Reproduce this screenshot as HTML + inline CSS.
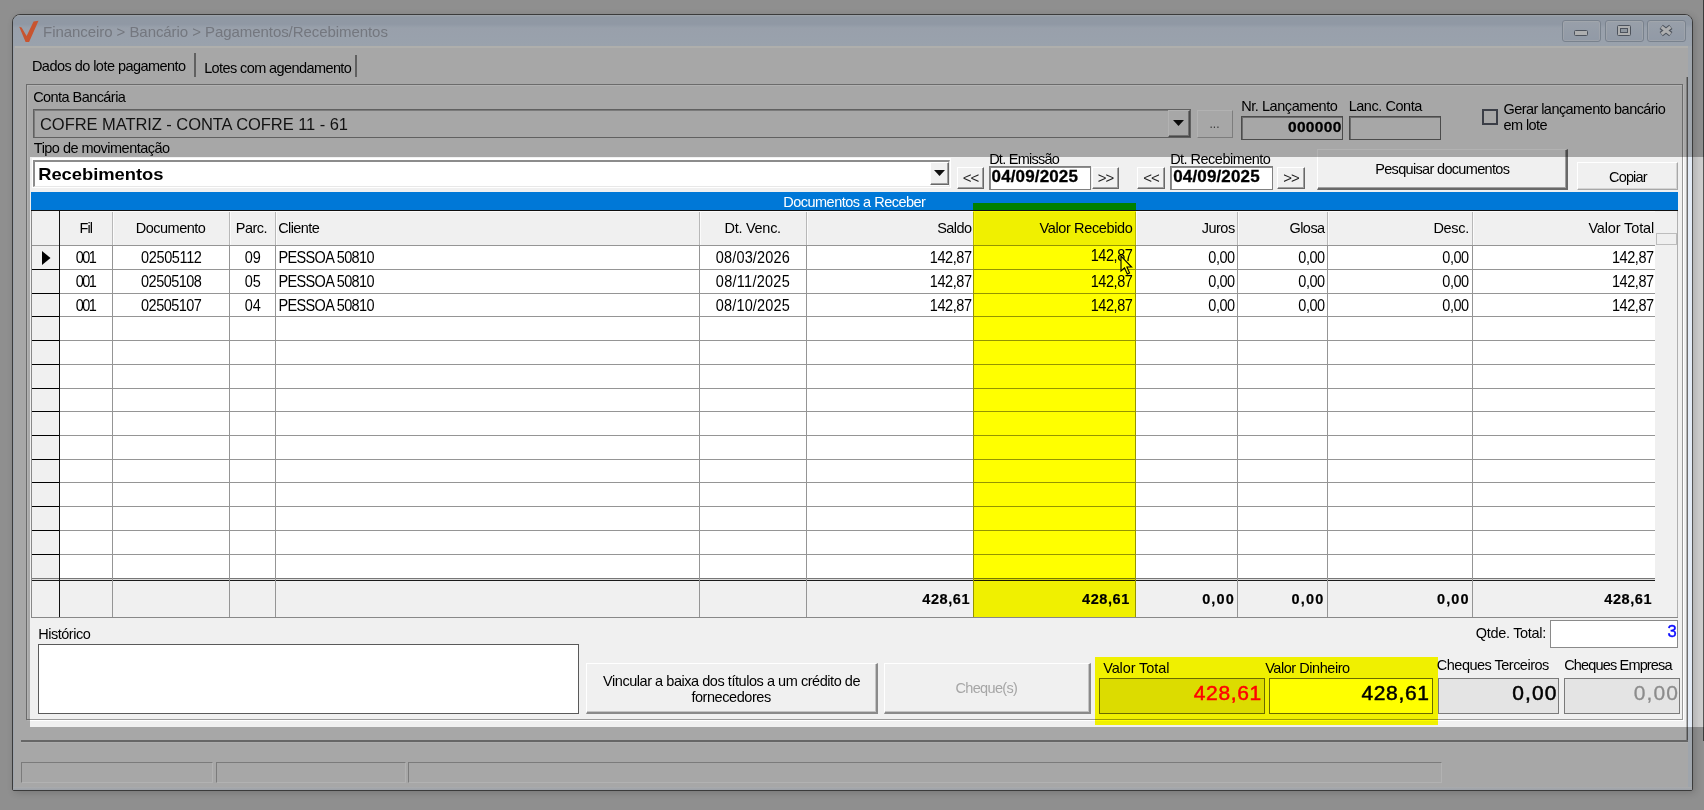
<!DOCTYPE html>
<html><head><meta charset="utf-8"><title>Pagamentos/Recebimentos</title>
<style>
html,body{margin:0;padding:0;}
body{width:1704px;height:810px;overflow:hidden;position:relative;background:#cdcdcd;font-family:"Liberation Sans", sans-serif;}
div{position:absolute;box-sizing:border-box;}
svg{position:absolute;overflow:visible;}
.t{font-family:"Liberation Sans", sans-serif;}
</style></head>
<body>
<div style="left:12px;top:14px;width:1681px;height:777px;background:#f0f0f0;border:1px solid #555;border-radius:8px 8px 2px 2px;box-shadow:2px 2px 7px rgba(0,0,0,.16);"></div>
<div style="left:13px;top:15px;width:1679px;height:31px;background:linear-gradient(#e4ecf6 0,#cfdbeb 2px,#cedaeb 9px,#dbe6f5 13px,#dde8f7 100%);border-radius:7px 7px 0 0;"></div>
<div style="left:15px;top:46px;width:1673px;height:740px;background:#f0f0f0;"></div>
<div style="left:15px;top:46px;width:1673px;height:2px;background:#fbfbf6;"></div>
<div style="left:13px;top:46px;width:1px;height:744px;background:#e3ebf6;"></div>
<div style="left:1688px;top:46px;width:4px;height:744px;background:#e4ecf7;"></div>
<div style="left:13px;top:787px;width:1679px;height:3px;background:linear-gradient(#f4f6f9,#dfe6f0);"></div>
<div style="left:1686px;top:77px;width:1px;height:665px;background:#b5b5b5;"></div>
<div style="left:1687px;top:77px;width:1px;height:665px;background:#6f6f6f;"></div>
<div style="left:21px;top:740px;width:1667px;height:2px;background:#929292;"></div>
<div style="left:21px;top:742px;width:1667px;height:1px;background:#f8f8f8;"></div>
<div class="t" id="t11" style="top:16.5px;font-size:15px;line-height:30px;height:30px;font-weight:normal;color:#a6abb6;white-space:nowrap;letter-spacing:-0.063px;left:43.10px;"><span>Financeiro &gt; Bancário &gt; Pagamentos/Recebimentos</span></div>
<div style="left:1562px;top:20px;width:39px;height:22px;background:linear-gradient(#dbe5f3,#d0dcee);border:1px solid #aebacb;border-radius:3px;box-shadow:inset 0 0 0 1px rgba(255,255,255,.35);"></div>
<div style="left:1605px;top:20px;width:39px;height:22px;background:linear-gradient(#dbe5f3,#d0dcee);border:1px solid #aebacb;border-radius:3px;box-shadow:inset 0 0 0 1px rgba(255,255,255,.35);"></div>
<div style="left:1647px;top:20px;width:39px;height:22px;background:linear-gradient(#dbe5f3,#d0dcee);border:1px solid #aebacb;border-radius:3px;box-shadow:inset 0 0 0 1px rgba(255,255,255,.35);"></div>
<div style="left:1574px;top:30px;width:14px;height:6px;background:#fafbfc;border:1px solid #6f7886;border-radius:1.5px;"></div>
<div style="left:1617px;top:25px;width:14px;height:11px;background:#fafbfc;border:1px solid #6f7886;border-radius:1.5px;"></div>
<div style="left:1620px;top:28px;width:8px;height:5px;background:#cdd8e6;border:1px solid #6f7886;"></div>
<svg style="left:1658px;top:24px" width="16" height="13" viewBox="0 0 16 13"><path d="M3.2 2.8 L12.8 10.2 M12.8 2.8 L3.2 10.2" stroke="#6f7886" stroke-width="5.4" stroke-linecap="butt"/><path d="M3.6 3.1 L12.4 9.9 M12.4 3.1 L3.6 9.9" stroke="#fafbfc" stroke-width="3.2" stroke-linecap="butt"/></svg>
<div class="t" id="t19" style="top:51px;font-size:14.5px;line-height:30px;height:30px;font-weight:normal;color:#000;white-space:nowrap;letter-spacing:-0.538px;left:31.93px;"><span>Dados do lote pagamento</span></div>
<div style="left:194px;top:53px;width:2px;height:24px;background:#8a8a8a;"></div>
<div class="t" id="t21" style="top:53px;font-size:14.5px;line-height:30px;height:30px;font-weight:normal;color:#000;white-space:nowrap;letter-spacing:-0.593px;left:204.13px;"><span>Lotes com agendamento</span></div>
<div style="left:355px;top:55px;width:2px;height:22px;background:#8a8a8a;"></div>
<div style="left:26px;top:84px;width:1657px;height:636px;background:#f0f0f0;border:1px solid #9a9a9a;box-shadow:inset 1px 1px 0 #fff, 1px 1px 0 #fff;"></div>
<div class="t" id="t24" style="top:82px;font-size:14.5px;line-height:30px;height:30px;font-weight:normal;color:#000;white-space:nowrap;letter-spacing:-0.555px;left:33.13px;"><span>Conta Bancária</span></div>
<div style="left:33px;top:109px;width:1158px;height:29px;background:#f0f0f0;border:1px solid #8a8a8a;box-shadow:inset 1px 1px 0 #b0b0b0;"></div>
<div class="t" id="t26" style="top:109px;font-size:16.5px;line-height:30px;height:30px;font-weight:normal;color:#1a1a1a;white-space:nowrap;letter-spacing:-0.057px;left:40.01px;"><span>COFRE MATRIZ - CONTA COFRE 11 - 61</span></div>
<div style="left:1168px;top:110px;width:22px;height:27px;background:#f0f0f0;border-top:1px solid #ffffff;border-left:1px solid #ffffff;border-right:1px solid #696969;border-bottom:1px solid #696969;box-shadow:inset -1px -1px 0 #a0a0a0;"></div>
<svg style="left:1173px;top:120px" width="11" height="6"><path d="M0 0 H11 L5.5 6 Z" fill="#111"/></svg>
<div style="left:1197px;top:110px;width:36px;height:28px;background:#f0f0f0;border-top:1px solid #fff;border-left:1px solid #fff;border-right:1px solid #b4b4b4;border-bottom:1px solid #b4b4b4;"></div>
<div class="t" id="t30" style="top:109px;font-size:12px;line-height:30px;height:30px;font-weight:normal;color:#555;white-space:nowrap;left:714.50px;width:1000px;text-align:center;"><span>...</span></div>
<div class="t" id="t31" style="top:91px;font-size:14.5px;line-height:30px;height:30px;font-weight:normal;color:#000;white-space:nowrap;letter-spacing:-0.433px;left:1241.13px;"><span>Nr. Lançamento</span></div>
<div style="left:1241px;top:116px;width:102px;height:24px;background:#f0f0f0;border:1px solid #6c6c6c;box-shadow:inset 1px 1px 0 #9c9c9c;"></div>
<div class="t" id="t33" style="top:111.5px;font-size:15.5px;line-height:30px;height:30px;font-weight:bold;color:#000;white-space:nowrap;letter-spacing:0.365px;right:362.20px;-webkit-text-stroke:0.3px #000;"><span>000000</span></div>
<div class="t" id="t34" style="top:91px;font-size:14.5px;line-height:30px;height:30px;font-weight:normal;color:#000;white-space:nowrap;letter-spacing:-0.446px;left:1348.63px;"><span>Lanc. Conta</span></div>
<div style="left:1349px;top:116px;width:92px;height:24px;background:#f0f0f0;border:1px solid #6c6c6c;box-shadow:inset 1px 1px 0 #9c9c9c;"></div>
<div style="left:1482px;top:109px;width:16px;height:16px;background:#f0f0f0;border:2px solid #555a66;"></div>
<div class="t" id="t37" style="top:94px;font-size:14.5px;line-height:30px;height:30px;font-weight:normal;color:#000;white-space:nowrap;letter-spacing:-0.553px;left:1503.43px;"><span>Gerar lançamento bancário</span></div>
<div class="t" id="t38" style="top:110px;font-size:14.5px;line-height:30px;height:30px;font-weight:normal;color:#000;white-space:nowrap;letter-spacing:-0.570px;left:1503.43px;"><span>em lote</span></div>
<div class="t" id="t39" style="top:133px;font-size:14.5px;line-height:30px;height:30px;font-weight:normal;color:#000;white-space:nowrap;letter-spacing:-0.522px;left:33.83px;"><span>Tipo de movimentação</span></div>
<div style="left:32px;top:158px;width:919px;height:30px;background:#fff;border:1px solid #fff;"></div>
<div style="left:33px;top:160px;width:917px;height:27px;background:#fff;border-top:2px solid #8c8c8c;border-left:2px solid #8c8c8c;border-right:1px solid #e8e8e8;border-bottom:1px solid #e8e8e8;"></div>
<div class="t" id="t42" style="top:158.5px;font-size:18.4px;line-height:30px;height:30px;font-weight:bold;color:#000;white-space:nowrap;letter-spacing:-0.046px;left:38.20px;transform:scaleY(0.93);transform-origin:0 21.5px;"><span>Recebimentos</span></div>
<div style="left:930px;top:162px;width:19px;height:23px;background:#f0f0f0;border-top:1px solid #ffffff;border-left:1px solid #ffffff;border-right:1px solid #696969;border-bottom:1px solid #696969;box-shadow:inset -1px -1px 0 #a0a0a0;"></div>
<svg style="left:934px;top:170px" width="11" height="6"><path d="M0 0 H11 L5.5 6 Z" fill="#111"/></svg>
<div style="left:957px;top:167px;width:27px;height:22px;background:#f0f0f0;border-top:1px solid #ffffff;border-left:1px solid #ffffff;border-right:1px solid #696969;border-bottom:1px solid #696969;box-shadow:inset -1px -1px 0 #a0a0a0;"></div>
<div class="t" id="t46" style="top:162.5px;font-size:15px;line-height:30px;height:30px;font-weight:normal;color:#222;white-space:nowrap;left:470.50px;width:1000px;text-align:center;letter-spacing:-1px;"><span>&lt;&lt;</span></div>
<div class="t" id="t47" style="top:144px;font-size:14.5px;line-height:30px;height:30px;font-weight:normal;color:#000;white-space:nowrap;letter-spacing:-0.743px;left:989.13px;"><span>Dt. Emissão</span></div>
<div style="left:989px;top:166px;width:102px;height:24px;background:#fff;border:1px solid #808080;box-shadow:inset 1px 1px 0 #8e8e8e;"></div>
<div class="t" id="t49" style="top:161.5px;font-size:17px;line-height:30px;height:30px;font-weight:bold;color:#000;white-space:nowrap;letter-spacing:0.138px;left:991.58px;transform:scaleY(0.96);transform-origin:0 20.5px;-webkit-text-stroke:0.3px #000;"><span>04/09/2025</span></div>
<div style="left:1092px;top:167px;width:27px;height:22px;background:#f0f0f0;border-top:1px solid #ffffff;border-left:1px solid #ffffff;border-right:1px solid #696969;border-bottom:1px solid #696969;box-shadow:inset -1px -1px 0 #a0a0a0;"></div>
<div class="t" id="t51" style="top:162.5px;font-size:15px;line-height:30px;height:30px;font-weight:normal;color:#222;white-space:nowrap;left:605.50px;width:1000px;text-align:center;letter-spacing:-1px;"><span>&gt;&gt;</span></div>
<div style="left:1137px;top:167px;width:28px;height:22px;background:#f0f0f0;border-top:1px solid #ffffff;border-left:1px solid #ffffff;border-right:1px solid #696969;border-bottom:1px solid #696969;box-shadow:inset -1px -1px 0 #a0a0a0;"></div>
<div class="t" id="t53" style="top:162.5px;font-size:15px;line-height:30px;height:30px;font-weight:normal;color:#222;white-space:nowrap;left:651.00px;width:1000px;text-align:center;letter-spacing:-1px;"><span>&lt;&lt;</span></div>
<div class="t" id="t54" style="top:144px;font-size:14.5px;line-height:30px;height:30px;font-weight:normal;color:#000;white-space:nowrap;letter-spacing:-0.519px;left:1170.13px;"><span>Dt. Recebimento</span></div>
<div style="left:1170px;top:166px;width:103px;height:24px;background:#fff;border:1px solid #808080;box-shadow:inset 1px 1px 0 #8e8e8e;"></div>
<div class="t" id="t56" style="top:161.5px;font-size:17px;line-height:30px;height:30px;font-weight:bold;color:#000;white-space:nowrap;letter-spacing:0.138px;left:1173.28px;transform:scaleY(0.96);transform-origin:0 20.5px;-webkit-text-stroke:0.3px #000;"><span>04/09/2025</span></div>
<div style="left:1277px;top:167px;width:28px;height:22px;background:#f0f0f0;border-top:1px solid #ffffff;border-left:1px solid #ffffff;border-right:1px solid #696969;border-bottom:1px solid #696969;box-shadow:inset -1px -1px 0 #a0a0a0;"></div>
<div class="t" id="t58" style="top:162.5px;font-size:15px;line-height:30px;height:30px;font-weight:normal;color:#222;white-space:nowrap;left:791.00px;width:1000px;text-align:center;letter-spacing:-1px;"><span>&gt;&gt;</span></div>
<div style="left:1317px;top:149px;width:251px;height:41px;background:#f0f0f0;border-top:1px solid #ffffff;border-left:1px solid #ffffff;border-right:1px solid #696969;border-bottom:1px solid #696969;box-shadow:inset -1px -1px 0 #a0a0a0;border-right-width:2px;border-bottom-width:2px;"></div>
<div class="t" id="t60" style="top:154px;font-size:14.5px;line-height:30px;height:30px;font-weight:normal;color:#000;white-space:nowrap;letter-spacing:-0.672px;left:942.26px;width:1000px;text-align:center;"><span>Pesquisar documentos</span></div>
<div style="left:1577px;top:162px;width:101px;height:28px;background:#f0f0f0;border-top:1px solid #fff;border-left:1px solid #fff;border-right:1px solid #a8a8a8;border-bottom:1px solid #a8a8a8;box-shadow:inset -1px -1px 0 #d4d4d4;"></div>
<div class="t" id="t62" style="top:162px;font-size:14.5px;line-height:30px;height:30px;font-weight:normal;color:#000;white-space:nowrap;letter-spacing:-0.856px;left:1127.87px;width:1000px;text-align:center;"><span>Copiar</span></div>
<div style="left:31px;top:192px;width:1647px;height:19px;background:#0078d7;border-bottom:1px solid #101010;"></div>
<div class="t" id="t64" style="top:187px;font-size:14.5px;line-height:30px;height:30px;font-weight:normal;color:#fff;white-space:nowrap;letter-spacing:-0.505px;left:354.35px;width:1000px;text-align:center;"><span>Documentos a Receber</span></div>
<div style="left:31px;top:211px;width:1647px;height:407px;background:#f0f0f0;"></div>
<div style="left:31px;top:246px;width:1624px;height:332px;background:#fff;"></div>
<div style="left:31px;top:211px;width:1624px;height:35px;background:#f0f0f0;"></div>
<div style="left:31px;top:211px;width:28px;height:406px;background:#f0f0f0;"></div>
<div style="left:31px;top:245px;width:1624px;height:1px;background:#959595;"></div>
<div style="left:31px;top:269px;width:1624px;height:1px;background:#959595;"></div>
<div style="left:31px;top:293px;width:1624px;height:1px;background:#959595;"></div>
<div style="left:31px;top:316px;width:1624px;height:1px;background:#959595;"></div>
<div style="left:31px;top:340px;width:1624px;height:1px;background:#959595;"></div>
<div style="left:31px;top:364px;width:1624px;height:1px;background:#959595;"></div>
<div style="left:31px;top:388px;width:1624px;height:1px;background:#959595;"></div>
<div style="left:31px;top:411px;width:1624px;height:1px;background:#959595;"></div>
<div style="left:31px;top:435px;width:1624px;height:1px;background:#959595;"></div>
<div style="left:31px;top:459px;width:1624px;height:1px;background:#959595;"></div>
<div style="left:31px;top:482px;width:1624px;height:1px;background:#959595;"></div>
<div style="left:31px;top:506px;width:1624px;height:1px;background:#959595;"></div>
<div style="left:31px;top:530px;width:1624px;height:1px;background:#959595;"></div>
<div style="left:31px;top:554px;width:1624px;height:1px;background:#959595;"></div>
<div style="left:31px;top:269px;width:28px;height:1px;background:#000;"></div>
<div style="left:31px;top:293px;width:28px;height:1px;background:#000;"></div>
<div style="left:31px;top:316px;width:28px;height:1px;background:#000;"></div>
<div style="left:31px;top:340px;width:28px;height:1px;background:#000;"></div>
<div style="left:31px;top:364px;width:28px;height:1px;background:#000;"></div>
<div style="left:31px;top:388px;width:28px;height:1px;background:#000;"></div>
<div style="left:31px;top:411px;width:28px;height:1px;background:#000;"></div>
<div style="left:31px;top:435px;width:28px;height:1px;background:#000;"></div>
<div style="left:31px;top:459px;width:28px;height:1px;background:#000;"></div>
<div style="left:31px;top:482px;width:28px;height:1px;background:#000;"></div>
<div style="left:31px;top:506px;width:28px;height:1px;background:#000;"></div>
<div style="left:31px;top:530px;width:28px;height:1px;background:#000;"></div>
<div style="left:31px;top:554px;width:28px;height:1px;background:#000;"></div>
<div style="left:31px;top:578px;width:1624px;height:1px;background:#777;"></div>
<div style="left:31px;top:580px;width:1624px;height:1px;background:#1a1a1a;"></div>
<div style="left:31px;top:579px;width:1624px;height:1px;background:#ddd;"></div>
<div style="left:112px;top:211px;width:1px;height:406px;background:#959595;"></div>
<div style="left:112px;top:211px;width:1px;height:34px;background:#b8b8b8;"></div>
<div style="left:113px;top:211px;width:1px;height:34px;background:#fbfbfb;"></div>
<div style="left:229px;top:211px;width:1px;height:406px;background:#959595;"></div>
<div style="left:229px;top:211px;width:1px;height:34px;background:#b8b8b8;"></div>
<div style="left:230px;top:211px;width:1px;height:34px;background:#fbfbfb;"></div>
<div style="left:275px;top:211px;width:1px;height:406px;background:#959595;"></div>
<div style="left:275px;top:211px;width:1px;height:34px;background:#b8b8b8;"></div>
<div style="left:276px;top:211px;width:1px;height:34px;background:#fbfbfb;"></div>
<div style="left:699px;top:211px;width:1px;height:406px;background:#959595;"></div>
<div style="left:699px;top:211px;width:1px;height:34px;background:#b8b8b8;"></div>
<div style="left:700px;top:211px;width:1px;height:34px;background:#fbfbfb;"></div>
<div style="left:806px;top:211px;width:1px;height:406px;background:#959595;"></div>
<div style="left:806px;top:211px;width:1px;height:34px;background:#b8b8b8;"></div>
<div style="left:807px;top:211px;width:1px;height:34px;background:#fbfbfb;"></div>
<div style="left:973px;top:211px;width:1px;height:406px;background:#959595;"></div>
<div style="left:973px;top:211px;width:1px;height:34px;background:#b8b8b8;"></div>
<div style="left:974px;top:211px;width:1px;height:34px;background:#fbfbfb;"></div>
<div style="left:1135px;top:211px;width:1px;height:406px;background:#959595;"></div>
<div style="left:1135px;top:211px;width:1px;height:34px;background:#b8b8b8;"></div>
<div style="left:1136px;top:211px;width:1px;height:34px;background:#fbfbfb;"></div>
<div style="left:1237px;top:211px;width:1px;height:406px;background:#959595;"></div>
<div style="left:1237px;top:211px;width:1px;height:34px;background:#b8b8b8;"></div>
<div style="left:1238px;top:211px;width:1px;height:34px;background:#fbfbfb;"></div>
<div style="left:1327px;top:211px;width:1px;height:406px;background:#959595;"></div>
<div style="left:1327px;top:211px;width:1px;height:34px;background:#b8b8b8;"></div>
<div style="left:1328px;top:211px;width:1px;height:34px;background:#fbfbfb;"></div>
<div style="left:1472px;top:211px;width:1px;height:406px;background:#959595;"></div>
<div style="left:1472px;top:211px;width:1px;height:34px;background:#b8b8b8;"></div>
<div style="left:1473px;top:211px;width:1px;height:34px;background:#fbfbfb;"></div>
<div style="left:60px;top:211px;width:1595px;height:1px;background:#fbfbfb;"></div>
<div style="left:59px;top:211px;width:1px;height:406px;background:#111;"></div>
<div style="left:31px;top:211px;width:1px;height:406px;background:#888;"></div>
<div style="left:31px;top:617px;width:1647px;height:1px;background:#888;"></div>
<div style="left:1677px;top:211px;width:1px;height:406px;background:#b0b0b0;"></div>
<div style="left:1656px;top:233px;width:21px;height:12px;background:#efefef;border:1px solid #bdbdbd;"></div>
<div class="t" id="t135" style="top:213px;font-size:14.5px;line-height:30px;height:30px;font-weight:normal;color:#000;white-space:nowrap;letter-spacing:-0.936px;left:-414.17px;width:1000px;text-align:center;transform:scaleY(1.03);transform-origin:0 20px;"><span>Fil</span></div>
<div class="t" id="t136" style="top:213px;font-size:14.5px;line-height:30px;height:30px;font-weight:normal;color:#000;white-space:nowrap;letter-spacing:-0.515px;left:-329.46px;width:1000px;text-align:center;transform:scaleY(1.03);transform-origin:0 20px;"><span>Documento</span></div>
<div class="t" id="t137" style="top:213px;font-size:14.5px;line-height:30px;height:30px;font-weight:normal;color:#000;white-space:nowrap;letter-spacing:-0.526px;left:-248.56px;width:1000px;text-align:center;transform:scaleY(1.03);transform-origin:0 20px;"><span>Parc.</span></div>
<div class="t" id="t138" style="top:213px;font-size:14.5px;line-height:30px;height:30px;font-weight:normal;color:#000;white-space:nowrap;letter-spacing:-0.567px;left:278.13px;transform:scaleY(1.03);transform-origin:0 20px;"><span>Cliente</span></div>
<div class="t" id="t139" style="top:213px;font-size:14.5px;line-height:30px;height:30px;font-weight:normal;color:#000;white-space:nowrap;letter-spacing:-0.263px;left:252.67px;width:1000px;text-align:center;transform:scaleY(1.03);transform-origin:0 20px;"><span>Dt. Venc.</span></div>
<div class="t" id="t140" style="top:213px;font-size:14.5px;line-height:30px;height:30px;font-weight:normal;color:#000;white-space:nowrap;letter-spacing:-0.513px;right:732.34px;transform:scaleY(1.03);transform-origin:0 20px;"><span>Saldo</span></div>
<div class="t" id="t141" style="top:213px;font-size:14.5px;line-height:30px;height:30px;font-weight:normal;color:#000;white-space:nowrap;letter-spacing:-0.357px;right:571.49px;transform:scaleY(1.03);transform-origin:0 20px;"><span>Valor Recebido</span></div>
<div class="t" id="t142" style="top:213px;font-size:14.5px;line-height:30px;height:30px;font-weight:normal;color:#000;white-space:nowrap;letter-spacing:-0.532px;right:469.36px;transform:scaleY(1.03);transform-origin:0 20px;"><span>Juros</span></div>
<div class="t" id="t143" style="top:213px;font-size:14.5px;line-height:30px;height:30px;font-weight:normal;color:#000;white-space:nowrap;letter-spacing:-0.538px;right:379.37px;transform:scaleY(1.03);transform-origin:0 20px;"><span>Glosa</span></div>
<div class="t" id="t144" style="top:213px;font-size:14.5px;line-height:30px;height:30px;font-weight:normal;color:#000;white-space:nowrap;letter-spacing:-0.335px;right:235.16px;transform:scaleY(1.03);transform-origin:0 20px;"><span>Desc.</span></div>
<div class="t" id="t145" style="top:213px;font-size:14.5px;line-height:30px;height:30px;font-weight:normal;color:#000;white-space:nowrap;letter-spacing:-0.143px;right:49.97px;transform:scaleY(1.03);transform-origin:0 20px;"><span>Valor Total</span></div>
<div class="t" id="t146" style="top:243px;font-size:14.5px;line-height:30px;height:30px;font-weight:normal;color:#000;white-space:nowrap;letter-spacing:-1.532px;left:-414.57px;width:1000px;text-align:center;transform:scaleY(1.1);transform-origin:0 20px;"><span>001</span></div>
<div class="t" id="t147" style="top:243px;font-size:14.5px;line-height:30px;height:30px;font-weight:normal;color:#000;white-space:nowrap;letter-spacing:-0.371px;left:-328.69px;width:1000px;text-align:center;transform:scaleY(1.1);transform-origin:0 20px;"><span>02505112</span></div>
<div class="t" id="t148" style="top:243px;font-size:14.5px;line-height:30px;height:30px;font-weight:normal;color:#000;white-space:nowrap;letter-spacing:-0.101px;left:-247.25px;width:1000px;text-align:center;transform:scaleY(1.1);transform-origin:0 20px;"><span>09</span></div>
<div class="t" id="t149" style="top:243px;font-size:14.5px;line-height:30px;height:30px;font-weight:normal;color:#000;white-space:nowrap;letter-spacing:-0.659px;left:278.53px;transform:scaleY(1.1);transform-origin:0 20px;"><span>PESSOA 50810</span></div>
<div class="t" id="t150" style="top:243px;font-size:14.5px;line-height:30px;height:30px;font-weight:normal;color:#000;white-space:nowrap;letter-spacing:0.151px;left:252.88px;width:1000px;text-align:center;transform:scaleY(1.1);transform-origin:0 20px;"><span>08/03/2026</span></div>
<div class="t" id="t151" style="top:243px;font-size:14.5px;line-height:30px;height:30px;font-weight:normal;color:#000;white-space:nowrap;letter-spacing:-0.424px;right:732.45px;transform:scaleY(1.1);transform-origin:0 20px;"><span>142,87</span></div>
<div class="t" id="t152" style="top:241px;font-size:14.5px;line-height:30px;height:30px;font-weight:normal;color:#000;white-space:nowrap;letter-spacing:-0.424px;right:571.55px;transform:scaleY(1.1);transform-origin:0 20px;"><span>142,87</span></div>
<div class="t" id="t153" style="top:243px;font-size:14.5px;line-height:30px;height:30px;font-weight:normal;color:#000;white-space:nowrap;letter-spacing:-0.431px;right:469.26px;transform:scaleY(1.1);transform-origin:0 20px;"><span>0,00</span></div>
<div class="t" id="t154" style="top:243px;font-size:14.5px;line-height:30px;height:30px;font-weight:normal;color:#000;white-space:nowrap;letter-spacing:-0.431px;right:379.26px;transform:scaleY(1.1);transform-origin:0 20px;"><span>0,00</span></div>
<div class="t" id="t155" style="top:243px;font-size:14.5px;line-height:30px;height:30px;font-weight:normal;color:#000;white-space:nowrap;letter-spacing:-0.431px;right:235.26px;transform:scaleY(1.1);transform-origin:0 20px;"><span>0,00</span></div>
<div class="t" id="t156" style="top:243px;font-size:14.5px;line-height:30px;height:30px;font-weight:normal;color:#000;white-space:nowrap;letter-spacing:-0.424px;right:50.25px;transform:scaleY(1.1);transform-origin:0 20px;"><span>142,87</span></div>
<div class="t" id="t157" style="top:267px;font-size:14.5px;line-height:30px;height:30px;font-weight:normal;color:#000;white-space:nowrap;letter-spacing:-1.532px;left:-414.57px;width:1000px;text-align:center;transform:scaleY(1.1);transform-origin:0 20px;"><span>001</span></div>
<div class="t" id="t158" style="top:267px;font-size:14.5px;line-height:30px;height:30px;font-weight:normal;color:#000;white-space:nowrap;letter-spacing:-0.525px;left:-328.76px;width:1000px;text-align:center;transform:scaleY(1.1);transform-origin:0 20px;"><span>02505108</span></div>
<div class="t" id="t159" style="top:267px;font-size:14.5px;line-height:30px;height:30px;font-weight:normal;color:#000;white-space:nowrap;letter-spacing:-0.101px;left:-247.25px;width:1000px;text-align:center;transform:scaleY(1.1);transform-origin:0 20px;"><span>05</span></div>
<div class="t" id="t160" style="top:267px;font-size:14.5px;line-height:30px;height:30px;font-weight:normal;color:#000;white-space:nowrap;letter-spacing:-0.659px;left:278.53px;transform:scaleY(1.1);transform-origin:0 20px;"><span>PESSOA 50810</span></div>
<div class="t" id="t161" style="top:267px;font-size:14.5px;line-height:30px;height:30px;font-weight:normal;color:#000;white-space:nowrap;letter-spacing:0.271px;left:252.94px;width:1000px;text-align:center;transform:scaleY(1.1);transform-origin:0 20px;"><span>08/11/2025</span></div>
<div class="t" id="t162" style="top:267px;font-size:14.5px;line-height:30px;height:30px;font-weight:normal;color:#000;white-space:nowrap;letter-spacing:-0.424px;right:732.45px;transform:scaleY(1.1);transform-origin:0 20px;"><span>142,87</span></div>
<div class="t" id="t163" style="top:267px;font-size:14.5px;line-height:30px;height:30px;font-weight:normal;color:#000;white-space:nowrap;letter-spacing:-0.424px;right:571.55px;transform:scaleY(1.1);transform-origin:0 20px;"><span>142,87</span></div>
<div class="t" id="t164" style="top:267px;font-size:14.5px;line-height:30px;height:30px;font-weight:normal;color:#000;white-space:nowrap;letter-spacing:-0.431px;right:469.26px;transform:scaleY(1.1);transform-origin:0 20px;"><span>0,00</span></div>
<div class="t" id="t165" style="top:267px;font-size:14.5px;line-height:30px;height:30px;font-weight:normal;color:#000;white-space:nowrap;letter-spacing:-0.431px;right:379.26px;transform:scaleY(1.1);transform-origin:0 20px;"><span>0,00</span></div>
<div class="t" id="t166" style="top:267px;font-size:14.5px;line-height:30px;height:30px;font-weight:normal;color:#000;white-space:nowrap;letter-spacing:-0.431px;right:235.26px;transform:scaleY(1.1);transform-origin:0 20px;"><span>0,00</span></div>
<div class="t" id="t167" style="top:267px;font-size:14.5px;line-height:30px;height:30px;font-weight:normal;color:#000;white-space:nowrap;letter-spacing:-0.424px;right:50.25px;transform:scaleY(1.1);transform-origin:0 20px;"><span>142,87</span></div>
<div class="t" id="t168" style="top:291px;font-size:14.5px;line-height:30px;height:30px;font-weight:normal;color:#000;white-space:nowrap;letter-spacing:-1.532px;left:-414.57px;width:1000px;text-align:center;transform:scaleY(1.1);transform-origin:0 20px;"><span>001</span></div>
<div class="t" id="t169" style="top:291px;font-size:14.5px;line-height:30px;height:30px;font-weight:normal;color:#000;white-space:nowrap;letter-spacing:-0.525px;left:-328.76px;width:1000px;text-align:center;transform:scaleY(1.1);transform-origin:0 20px;"><span>02505107</span></div>
<div class="t" id="t170" style="top:291px;font-size:14.5px;line-height:30px;height:30px;font-weight:normal;color:#000;white-space:nowrap;letter-spacing:-0.101px;left:-247.25px;width:1000px;text-align:center;transform:scaleY(1.1);transform-origin:0 20px;"><span>04</span></div>
<div class="t" id="t171" style="top:291px;font-size:14.5px;line-height:30px;height:30px;font-weight:normal;color:#000;white-space:nowrap;letter-spacing:-0.659px;left:278.53px;transform:scaleY(1.1);transform-origin:0 20px;"><span>PESSOA 50810</span></div>
<div class="t" id="t172" style="top:291px;font-size:14.5px;line-height:30px;height:30px;font-weight:normal;color:#000;white-space:nowrap;letter-spacing:0.151px;left:252.88px;width:1000px;text-align:center;transform:scaleY(1.1);transform-origin:0 20px;"><span>08/10/2025</span></div>
<div class="t" id="t173" style="top:291px;font-size:14.5px;line-height:30px;height:30px;font-weight:normal;color:#000;white-space:nowrap;letter-spacing:-0.424px;right:732.45px;transform:scaleY(1.1);transform-origin:0 20px;"><span>142,87</span></div>
<div class="t" id="t174" style="top:291px;font-size:14.5px;line-height:30px;height:30px;font-weight:normal;color:#000;white-space:nowrap;letter-spacing:-0.424px;right:571.55px;transform:scaleY(1.1);transform-origin:0 20px;"><span>142,87</span></div>
<div class="t" id="t175" style="top:291px;font-size:14.5px;line-height:30px;height:30px;font-weight:normal;color:#000;white-space:nowrap;letter-spacing:-0.431px;right:469.26px;transform:scaleY(1.1);transform-origin:0 20px;"><span>0,00</span></div>
<div class="t" id="t176" style="top:291px;font-size:14.5px;line-height:30px;height:30px;font-weight:normal;color:#000;white-space:nowrap;letter-spacing:-0.431px;right:379.26px;transform:scaleY(1.1);transform-origin:0 20px;"><span>0,00</span></div>
<div class="t" id="t177" style="top:291px;font-size:14.5px;line-height:30px;height:30px;font-weight:normal;color:#000;white-space:nowrap;letter-spacing:-0.431px;right:235.26px;transform:scaleY(1.1);transform-origin:0 20px;"><span>0,00</span></div>
<div class="t" id="t178" style="top:291px;font-size:14.5px;line-height:30px;height:30px;font-weight:normal;color:#000;white-space:nowrap;letter-spacing:-0.424px;right:50.25px;transform:scaleY(1.1);transform-origin:0 20px;"><span>142,87</span></div>
<svg style="left:42px;top:251px" width="9" height="14"><path d="M0 0 L8.5 7 L0 14 Z" fill="#000"/></svg>
<div class="t" id="t180" style="top:584px;font-size:14.5px;line-height:30px;height:30px;font-weight:bold;color:#000;white-space:nowrap;letter-spacing:0.576px;right:733.95px;-webkit-text-stroke:0.2px #000;"><span>428,61</span></div>
<div class="t" id="t181" style="top:584px;font-size:14.5px;line-height:30px;height:30px;font-weight:bold;color:#000;white-space:nowrap;letter-spacing:0.576px;right:574.15px;-webkit-text-stroke:0.2px #000;"><span>428,61</span></div>
<div class="t" id="t182" style="top:584px;font-size:14.5px;line-height:30px;height:30px;font-weight:bold;color:#000;white-space:nowrap;letter-spacing:1.169px;right:468.96px;-webkit-text-stroke:0.2px #000;"><span>0,00</span></div>
<div class="t" id="t183" style="top:584px;font-size:14.5px;line-height:30px;height:30px;font-weight:bold;color:#000;white-space:nowrap;letter-spacing:1.169px;right:379.56px;-webkit-text-stroke:0.2px #000;"><span>0,00</span></div>
<div class="t" id="t184" style="top:584px;font-size:14.5px;line-height:30px;height:30px;font-weight:bold;color:#000;white-space:nowrap;letter-spacing:1.169px;right:234.16px;-webkit-text-stroke:0.2px #000;"><span>0,00</span></div>
<div class="t" id="t185" style="top:584px;font-size:14.5px;line-height:30px;height:30px;font-weight:bold;color:#000;white-space:nowrap;letter-spacing:0.576px;right:51.95px;-webkit-text-stroke:0.2px #000;"><span>428,61</span></div>
<div class="t" id="t186" style="top:619px;font-size:14.5px;line-height:30px;height:30px;font-weight:normal;color:#000;white-space:nowrap;letter-spacing:-0.458px;left:38.13px;"><span>Histórico</span></div>
<div style="left:38px;top:644px;width:541px;height:70px;background:#fff;border:1px solid #5a5a5a;"></div>
<div style="left:586px;top:663px;width:292px;height:51px;background:#f0f0f0;border-top:1px solid #ffffff;border-left:1px solid #ffffff;border-right:1px solid #696969;border-bottom:1px solid #696969;box-shadow:inset -1px -1px 0 #a0a0a0;border-right:2px solid #8a8a8a;border-bottom:2px solid #8a8a8a;box-shadow:inset -1px -1px 0 #c4c4c4;"></div>
<div class="t" id="t189" style="top:666px;font-size:14.5px;line-height:30px;height:30px;font-weight:normal;color:#000;white-space:nowrap;letter-spacing:-0.455px;left:231.57px;width:1000px;text-align:center;"><span>Vincular a baixa dos títulos a um crédito de</span></div>
<div class="t" id="t190" style="top:682px;font-size:14.5px;line-height:30px;height:30px;font-weight:normal;color:#000;white-space:nowrap;letter-spacing:-0.446px;left:231.08px;width:1000px;text-align:center;"><span>fornecedores</span></div>
<div style="left:884px;top:663px;width:207px;height:51px;background:#f0f0f0;border-top:1px solid #ffffff;border-left:1px solid #ffffff;border-right:1px solid #696969;border-bottom:1px solid #696969;box-shadow:inset -1px -1px 0 #a0a0a0;border-right:2px solid #8a8a8a;border-bottom:2px solid #8a8a8a;box-shadow:inset -1px -1px 0 #c4c4c4;"></div>
<div class="t" id="t192" style="top:673px;font-size:14.5px;line-height:30px;height:30px;font-weight:normal;color:#a6a6a6;white-space:nowrap;letter-spacing:-0.658px;left:486.37px;width:1000px;text-align:center;"><span>Cheque(s)</span></div>
<div class="t" id="t193" style="top:618px;font-size:14.5px;line-height:30px;height:30px;font-weight:normal;color:#000;white-space:nowrap;letter-spacing:-0.314px;left:1475.83px;"><span>Qtde. Total:</span></div>
<div style="left:1550px;top:620px;width:128px;height:28px;background:#fff;border:1px solid #8a8a8a;"></div>
<div class="t" id="t195" style="top:616px;font-size:16.5px;line-height:30px;height:30px;font-weight:normal;color:#0a0aff;white-space:nowrap;right:27.41px;-webkit-text-stroke:0.4px #0a0aff;"><span>3</span></div>
<div class="t" id="t196" style="top:653px;font-size:14.5px;line-height:30px;height:30px;font-weight:normal;color:#000;white-space:nowrap;letter-spacing:-0.093px;left:1103.13px;"><span>Valor Total</span></div>
<div style="left:1099px;top:678px;width:166px;height:36px;background:#dcdcdc;border:1px solid #6a6a6a;"></div>
<div class="t" id="t198" style="top:677.5px;font-size:21px;line-height:30px;height:30px;font-weight:normal;color:#ff0000;white-space:nowrap;letter-spacing:0.657px;right:442.08px;transform:scaleY(0.96);transform-origin:0 22.5px;-webkit-text-stroke:0.5px #ff0000;"><span>428,61</span></div>
<div class="t" id="t199" style="top:653px;font-size:14.5px;line-height:30px;height:30px;font-weight:normal;color:#000;white-space:nowrap;letter-spacing:-0.444px;left:1265.13px;"><span>Valor Dinheiro</span></div>
<div style="left:1269px;top:678px;width:164px;height:36px;background:#fff;border:1px solid #6a6a6a;"></div>
<div class="t" id="t201" style="top:677.5px;font-size:21px;line-height:30px;height:30px;font-weight:normal;color:#000;white-space:nowrap;letter-spacing:0.657px;right:274.38px;transform:scaleY(0.96);transform-origin:0 22.5px;-webkit-text-stroke:0.5px #000;"><span>428,61</span></div>
<div class="t" id="t202" style="top:650px;font-size:14.5px;line-height:30px;height:30px;font-weight:normal;color:#000;white-space:nowrap;letter-spacing:-0.513px;left:1436.83px;"><span>Cheques Terceiros</span></div>
<div style="left:1438px;top:678px;width:121px;height:36px;background:#e4e4e4;border:1px solid #7a7a7a;"></div>
<div class="t" id="t204" style="top:677.5px;font-size:21px;line-height:30px;height:30px;font-weight:normal;color:#000;white-space:nowrap;letter-spacing:1.115px;right:146.33px;transform:scaleY(0.96);transform-origin:0 22.5px;-webkit-text-stroke:0.5px #000;"><span>0,00</span></div>
<div class="t" id="t205" style="top:650px;font-size:14.5px;line-height:30px;height:30px;font-weight:normal;color:#000;white-space:nowrap;letter-spacing:-0.832px;left:1564.13px;"><span>Cheques Empresa</span></div>
<div style="left:1564px;top:678px;width:116px;height:36px;background:#e4e4e4;border:1px solid #7a7a7a;"></div>
<div class="t" id="t207" style="top:677.5px;font-size:21px;line-height:30px;height:30px;font-weight:normal;color:#8c8c8c;white-space:nowrap;letter-spacing:1.115px;right:24.92px;transform:scaleY(0.96);transform-origin:0 22.5px;-webkit-text-stroke:0.3px #8c8c8c;"><span>0,00</span></div>
<svg style="left:1120px;top:255px" width="14" height="21" viewBox="0 0 14 21"><path d="M1 1 L1 16 L4.5 12.8 L7.3 19 L9.6 18 L6.9 12 L11.6 12 Z" fill="#fff" stroke="#000" stroke-width="1.1" stroke-linejoin="miter"/></svg>
<div style="left:973px;top:211px;width:163px;height:406px;background:#ffff00;mix-blend-mode:multiply;"></div>
<div style="left:1095px;top:657px;width:343px;height:68px;background:#ffff00;mix-blend-mode:multiply;"></div>
<div style="left:973px;top:203px;width:163px;height:7px;background:#008000;"></div>
<div style="left:21px;top:762px;width:192px;height:21px;background:#f0f0f0;border-top:1px solid #b0b0b0;border-left:1px solid #b0b0b0;border-right:1px solid #fff;border-bottom:1px solid #fff;"></div>
<div style="left:216px;top:762px;width:190px;height:21px;background:#f0f0f0;border-top:1px solid #b0b0b0;border-left:1px solid #b0b0b0;border-right:1px solid #fff;border-bottom:1px solid #fff;"></div>
<div style="left:408px;top:762px;width:1034px;height:21px;background:#f0f0f0;border-top:1px solid #b0b0b0;border-left:1px solid #b0b0b0;border-right:1px solid #fff;border-bottom:1px solid #fff;"></div>
<div style="left:1703px;top:0px;width:1px;height:741px;background:#555;"></div>
<div style="left:0px;top:0px;width:1704px;height:157px;background:rgba(0,0,0,0.30);"></div>
<div style="left:0px;top:157px;width:30px;height:570px;background:rgba(0,0,0,0.30);"></div>
<div style="left:0px;top:727px;width:1704px;height:83px;background:rgba(0,0,0,0.30);"></div>
<svg style="left:0;top:0" width="60" height="50" viewBox="0 0 60 50"><path d="M19.2 26.8 L21.6 27.4 L26.6 36 L33.6 21.6 L38.5 20.7 L29.1 42 L25.6 42 Z" fill="#c8542f"/></svg>
</body></html>
